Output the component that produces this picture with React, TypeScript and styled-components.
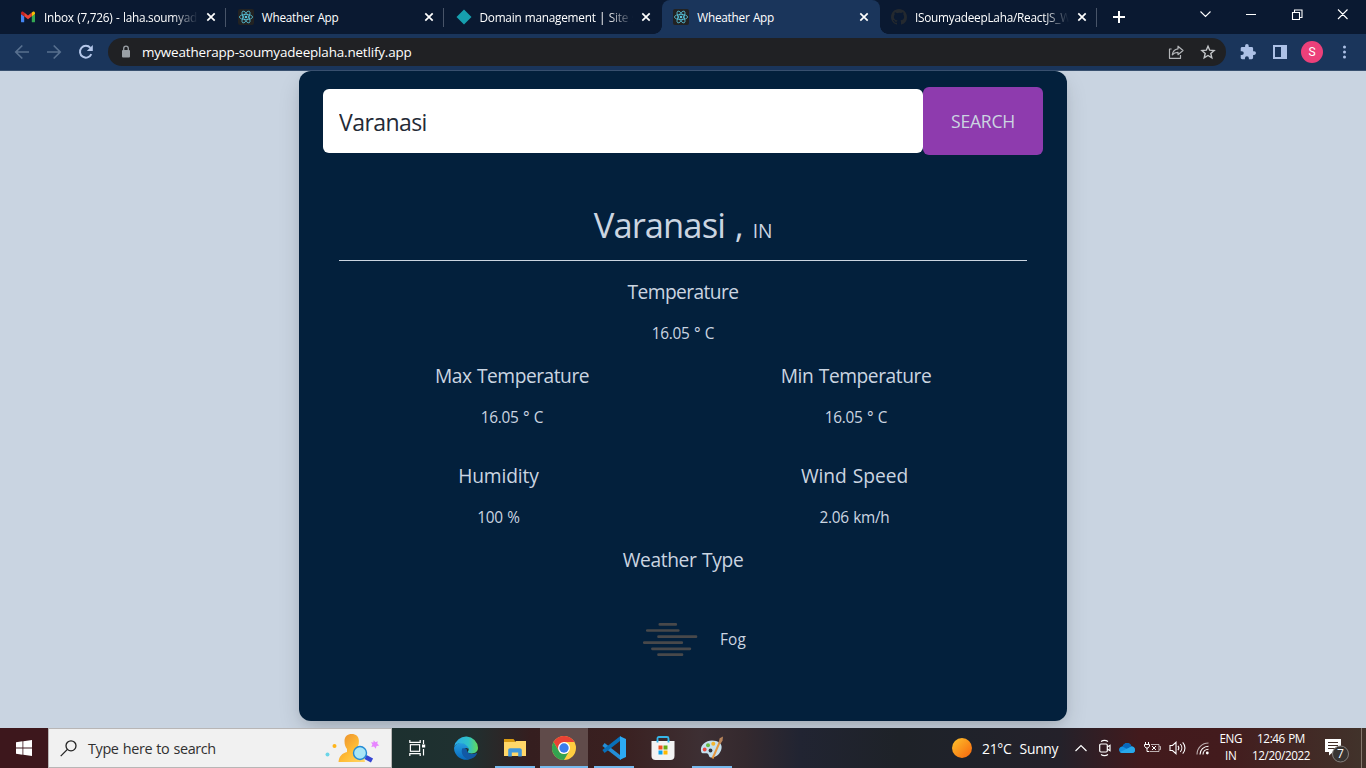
import React from "react";
import styled, { createGlobalStyle, css } from "styled-components";

const type = (px: number, tracking = -0.02) => css`
  font-size: ${px * 0.96}px;
  letter-spacing: ${px * tracking}px;
  word-spacing: ${px * 0.05}px;
`;

const GlobalStyle = createGlobalStyle`
  * { box-sizing: border-box; }
  body { margin: 0; overflow: hidden; font-family: "Open Sans", "Noto Sans", sans-serif; }
  svg { display: block; flex: none; }
`;

const Screen = styled.div`
  width: 1366px;
  height: 768px;
  display: flex;
  flex-direction: column;
  overflow: hidden;
`;

/* ---------- Browser chrome ---------- */
const TabStrip = styled.div`
  height: 34px;
  flex: none;
  display: flex;
  background: #0a1931;
  padding-left: 9px;
  color: #fff;
`;

const TabItem = styled.div<{ $active?: boolean; $divider?: boolean }>`
  position: relative;
  width: 217.75px;
  flex: none;
  display: flex;
  align-items: center;
  padding: 0 10px 0 11px;
  background: ${(p) => (p.$active ? "#1a355b" : "transparent")};
  border-radius: 8px 8px 0 0;
  ${(p) =>
    p.$divider &&
    css`
      &::after {
        content: "";
        position: absolute;
        right: 0.5px;
        top: 8px;
        width: 1px;
        height: 19px;
        background: #485468;
      }
    `}
  ${(p) =>
    p.$active &&
    css`
      &::before,
      &::after {
        content: "";
        position: absolute;
        bottom: 0;
        width: 8px;
        height: 8px;
      }
      &::before {
        left: -8px;
        background: radial-gradient(circle at 0 0, transparent 7.5px, #1a355b 8px);
      }
      &::after {
        right: -8px;
        background: radial-gradient(circle at 100% 0, transparent 7.5px, #1a355b 8px);
      }
    `}
`;

const TabTitle = styled.span<{ $fade?: boolean }>`
  ${type(12.3)}
  flex: 1;
  min-width: 0;
  margin: 0 7px 0 8px;
  line-height: 18px;
  white-space: nowrap;
  ${(p) => p.$fade && css`mask-image: linear-gradient(90deg, #000 calc(100% - 26px), transparent);`}
`;

const StripControls = styled.div`
  flex: 1;
  display: flex;
  align-items: center;
`;

const NewTab = styled.span`
  width: 97px;
  padding-left: 14px;
`;

const Toolbar = styled.div`
  height: 37px;
  flex: none;
  display: flex;
  align-items: center;
  background: #1a355b;
  border-bottom: 1px solid #38506f;
  padding: 0 13px;
`;

const NavButtons = styled.div`
  display: flex;
  gap: 16px;
  width: 95px;
  padding-left: 1px;
`;

const AddressBar = styled.div`
  width: 1118px;
  height: 28px;
  display: flex;
  align-items: center;
  border-radius: 14px;
  background: #202124;
  padding: 0 10px 0 12px;
`;

const Url = styled.span`
  ${type(14, -0.0115)}
  flex: 1;
  margin-left: 10px;
  color: #fff;
  line-height: 20px;
`;

const AddressActions = styled.div`
  display: flex;
  gap: 16px;
`;

const Extensions = styled.div`
  display: flex;
  align-items: center;
  margin-left: 14px;
  flex: 1;
`;

const PanelIcon = styled.span`
  width: 14px;
  height: 14px;
  margin-left: 17px;
  border: 2px solid #adc1e6;
  border-right-width: 6px;
`;

const Avatar = styled.span`
  width: 22px;
  height: 22px;
  margin: 0 13px 0 14px;
  border-radius: 50%;
  background: #ec407a;
  color: #fff;
  font: 12px/22px Roboto, sans-serif;
  text-align: center;
`;

/* ---------- Page ---------- */
const Page = styled.main`
  height: 657px;
  flex: none;
  display: flex;
  justify-content: center;
  align-items: flex-start;
  background: #c9d4e1;
  overflow: hidden;
`;

const Card = styled.section`
  width: 768px;
  height: 650px;
  border-radius: 12px;
  background: #03203c;
  color: #cbd5e1;
  padding: 16px 24px 0;
  box-shadow: 0 10px 25px -3px rgba(0, 0, 0, 0.16), 0 4px 12px -4px rgba(0, 0, 0, 0.1);
`;

const SearchForm = styled.form`
  display: flex;
  align-items: center;
  height: 68px;
`;

const SearchInput = styled.input`
  ${type(24, -0.024)}
  width: 600px;
  height: 64px;
  border: 0;
  outline: 0;
  border-radius: 6px;
  padding: 2px 16px 0;
  background: #fff;
  color: #242a36;
  font-family: inherit;
`;

const SearchButton = styled.button`
  ${type(18.3, -0.013)}
  width: 120px;
  height: 68px;
  border: 0;
  border-radius: 6px;
  background: #8e3bae;
  color: #cbd5e1;
  font-family: inherit;
`;

const Result = styled.div`
  margin: 0 16px;
  text-align: center;
`;

const Place = styled.h1`
  ${type(36, -0.026)}
  margin: 0;
  height: 106px;
  padding-top: 50px;
  border-bottom: 1px solid #cbd5e1;
  font-weight: 400;
  line-height: 40px;
`;

const Country = styled.span`
  ${type(20, -0.005)}
`;

const Metric = styled.div<{ $shift?: number }>`
  margin-left: ${(p) => p.$shift ?? 0}px;
`;

const MetricName = styled.h2<{ $tracking?: number }>`
  ${(p) => type(20, p.$tracking ?? -0.022)}
  margin: 0;
  font-weight: 400;
  line-height: 28px;
`;

const MetricValue = styled.p`
  ${type(16, -0.018)}
  margin: 16px 0 0;
  line-height: 24px;
`;

const MetricRow = styled.div<{ $columns: string; $gap: number }>`
  display: grid;
  grid-template-columns: ${(p) => p.$columns};
  margin-top: ${(p) => p.$gap}px;
`;

const Condition = styled.div`
  display: flex;
  align-items: center;
  height: 100px;
  margin-top: 16px;
  padding-left: 281px;
`;

const ConditionText = styled.span`
  ${type(16, 0.01)}
  margin-top: -1px;
`;

const FogArt = styled.svg`
  width: 100px;
  height: 100px;
`;

/* ---------- Taskbar ---------- */
const Taskbar = styled.footer`
  height: 40px;
  flex: none;
  display: flex;
  color: #fff;
  background: linear-gradient(
    90deg,
    #3d171c 0,
    #3d171c 48px,
    #1c302f 390px,
    #203030 470px,
    #351e1f 530px,
    #3a2020 620px,
    #3d2f33 700px,
    #34292e 745px,
    #212432 800px,
    #1e2228 900px,
    #1f222a 960px,
    #24212a 1060px,
    #421a1d 1140px,
    #431b1d 1220px,
    #41332b 1366px
  );
`;

const StartButton = styled.div`
  width: 48px;
  display: flex;
  align-items: center;
  justify-content: center;
`;

const SearchBox = styled.div`
  width: 344px;
  display: flex;
  align-items: center;
  background: #f1f1f1;
  border: 1px solid #b8b6b6;
  padding: 0 11px;
  color: #303030;
`;

const SearchHint = styled.span`
  ${type(15, -0.024)}
  flex: 1;
  margin-left: 10px;
`;

const Apps = styled.div`
  display: flex;
  width: 560px;
  padding-left: 0.6px;
`;

const TaskButton = styled.div<{ $open?: boolean; $current?: boolean }>`
  width: ${(p) => (p.$current ? 48 : 40)}px;
  margin: 0 ${(p) => (p.$current ? 0.55 : 4.55)}px;
  display: flex;
  align-items: center;
  justify-content: center;
  padding-top: ${(p) => (p.$open || p.$current ? 2 : 0)}px;
  background: ${(p) => (p.$current ? "#604b4a" : "transparent")};
  border-bottom: ${(p) => (p.$open || p.$current ? "2px solid #76b9ed" : "0")};
`;

const Weather = styled.div`
  ${type(14.5)}
  display: flex;
  align-items: center;
  width: 120px;
`;

const WeatherText = styled.span`
  margin-left: 10px;
  white-space: pre;
`;

const Tray = styled.div`
  display: flex;
  align-items: center;
  gap: 8.6px;
  width: 139px;
  padding-left: 2px;
`;

const Clock = styled.div<{ $width: number }>`
  ${type(12.2, -0.032)}
  width: ${(p) => p.$width}px;
  text-align: center;
  line-height: 17px;
  padding-top: 2px;
  white-space: nowrap;
`;

const Notifications = styled.div`
  display: flex;
  align-items: center;
  flex: 1;
  padding: 4px 0 0 13px;
`;

const DesktopEdge = styled.div`
  width: 5px;
  border-left: 1px solid #85796f;
`;

/* ---------- Icons ---------- */
const CloseIcon = () => (
  <svg width="12" height="12" viewBox="0 0 12 12" stroke="#fff" strokeWidth="1.7">
    <path d="M2.3 2.3 9.7 9.7M9.7 2.3 2.3 9.7" />
  </svg>
);

const GmailIcon = () => (
  <svg width="16" height="16" viewBox="0 0 16 16">
    <path fill="#4285f4" d="M1 5v7.4c0 .5.4.9.9.9h2.3V7.2Z" />
    <path fill="#34a853" d="M15 5v7.4c0 .5-.4.9-.9.9h-2.3V7.2Z" />
    <path fill="#ea4335" d="M4.2 3.5 8 6.4l3.8-2.9v3.8L8 10.2 4.2 7.3Z" />
    <path fill="#c5221f" d="M1 4.1v1l3.2 2.4v-4l-1-.7C2.3 2.2 1 2.9 1 4.1Z" />
    <path fill="#fbbc04" d="M15 4.1v1l-3.2 2.4v-4l1-.7c.9-.6 2.2.1 2.2 1.3Z" />
  </svg>
);

const ReactIcon = () => (
  <svg width="16" height="16" viewBox="0 0 16 16" fill="none" stroke="#58c4dc" strokeWidth=".8">
    <rect width="16" height="16" rx="2" fill="#222" stroke="none" />
    <ellipse cx="8" cy="8" rx="6.6" ry="2.6" />
    <ellipse cx="8" cy="8" rx="6.6" ry="2.6" transform="rotate(60 8 8)" />
    <ellipse cx="8" cy="8" rx="6.6" ry="2.6" transform="rotate(120 8 8)" />
    <circle cx="8" cy="8" r="1.3" fill="#58c4dc" stroke="none" />
  </svg>
);

const NetlifyIcon = () => (
  <svg width="16" height="16" viewBox="0 0 16 16">
    <path fill="#169fae" d="M8 .5 15.5 8 8 15.5.5 8Z" />
  </svg>
);

const GithubIcon = () => (
  <svg width="16" height="16" viewBox="0 0 16 16" fill="#24292f">
    <path d="M8 0C3.58 0 0 3.58 0 8c0 3.54 2.29 6.53 5.47 7.59.4.07.55-.17.55-.38 0-.19-.01-.82-.01-1.49-2.01.37-2.53-.49-2.69-.94-.09-.23-.48-.94-.82-1.13-.28-.15-.68-.52-.01-.53.63-.01 1.08.58 1.23.82.72 1.21 1.87.87 2.33.66.07-.52.28-.87.51-1.07-1.78-.2-3.64-.89-3.64-3.95 0-.87.31-1.59.82-2.15-.08-.2-.36-1.02.08-2.12 0 0 .67-.21 2.2.82A7.6 7.6 0 0 1 8 3.86c.68 0 1.36.09 2 .27 1.53-1.04 2.2-.82 2.2-.82.44 1.1.16 1.92.08 2.12.51.56.82 1.27.82 2.15 0 3.07-1.87 3.75-3.65 3.95.29.25.54.73.54 1.48 0 1.07-.01 1.93-.01 2.2 0 .21.15.46.55.38A8 8 0 0 0 16 8c0-4.42-3.58-8-8-8Z" />
  </svg>
);

const ArrowIcon = ({ right }: { right?: boolean }) => (
  <svg width="16" height="16" viewBox="0 0 16 16" fill="none" stroke="#58708f" strokeWidth="1.7">
    <path d={right ? "M1 8h13M7.7 1.5 14.2 8l-6.5 6.5" : "M15 8H2M8.3 1.5 1.8 8l6.500 6.500"} />
  </svg>
);

const ReloadIcon = () => (
  <svg width="16" height="16" viewBox="0 0 16 16">
    <path d="M13.3 10.1A5.9 5.9 0 1 1 12.4 3.9" fill="none" stroke="#b4c7ea" strokeWidth="2" />
    <path d="M14.8 1v6H8.8Z" fill="#b4c7ea" />
  </svg>
);

const LockIcon = () => (
  <svg width="12" height="14" viewBox="0 0 12 14">
    <rect x="2" y="5" width="8" height="7.5" rx="1" fill="#9aa0a6" />
    <path d="M3.7 5V3.5a2.3 2.3 0 0 1 4.6 0V5" fill="none" stroke="#9aa0a6" strokeWidth="1.3" />
  </svg>
);

const ShareIcon = () => (
  <svg width="16" height="16" viewBox="0 0 16 16" fill="none" stroke="#b4b6b9" strokeWidth="1.2" strokeLinejoin="round">
    <path d="M3.6 5H1.5v9.3h11V11" />
    <path d="M10 2.2 15 6.500l-5 4.200V8.300c-2.600 0-4.300.7-5.700 2.500.4-3.300 2.300-5.500 5.700-6Z" />
  </svg>
);

const StarIcon = () => (
  <svg width="16" height="16" viewBox="0 0 16 16" fill="none" stroke="#c4c7ca" strokeWidth="1.4">
    <path d="m8 2.200 1.700 4 4.400.4-3.300 2.900 1 4.300L8 11.500l-3.800 2.300 1-4.300-3.300-2.900 4.400-.4Z" />
  </svg>
);

const PuzzleIcon = () => (
  <svg width="16" height="16" viewBox="1 1 22 22" fill="#adc1e6">
    <path d="M20.500 11H19V7a2 2 0 0 0-2-2h-4V3.500a2.500 2.500 0 0 0-5 0V5H4a2 2 0 0 0-2 2v3.800h1.500a2.700 2.700 0 0 1 0 5.400H2V20c0 1.100.9 2 2 2h3.800v-1.500a2.700 2.700 0 0 1 5.400 0V22H17a2 2 0 0 0 2-2v-4h1.500a2.500 2.500 0 0 0 0-5Z" />
  </svg>
);

const FogIcon = () => (
  <FogArt viewBox="0 0 100 100" stroke="#48484a" strokeWidth="2.7" strokeLinecap="round">
    <path d="M39.8 34.4h16M27.3 40.5h31M38.5 46.7h37.5M24.3 52.7h37.5M32.4 58.8h37.5M38.5 64.7h23.5" />
  </FogArt>
);

const WindowsIcon = () => (
  <svg width="16" height="16" viewBox="0 0 16 16" fill="#fff">
    <path d="M0 2.2 6.5 1.3v6.3H0ZM7.3 1.2 16 0v7.6H7.3ZM0 8.4h6.5v6.3L0 13.8ZM7.3 8.4H16V16l-8.7-1.2Z" />
  </svg>
);

const MagnifierIcon = () => (
  <svg width="18" height="18" viewBox="0 0 18 18" fill="none" stroke="#222" strokeWidth="1.3">
    <circle cx="11" cy="6.8" r="5" />
    <path d="m7.4 10.4-6.7 6.7" />
  </svg>
);

const SearchArt = () => (
  <svg width="56" height="32" viewBox="0 0 56 32">
    <defs>
      <linearGradient id="person" x1="0" x2="1" y1="0" y2="1">
        <stop offset="0" stopColor="#e8892d" />
        <stop offset=".55" stopColor="#ffbd35" />
        <stop offset="1" stopColor="#ffd76a" />
      </linearGradient>
    </defs>
    <circle cx="3.5" cy="22.5" r="2" fill="#6bd5e8" />
    <circle cx="10.5" cy="14" r="2" fill="#ffb51b" />
    <path fill="url(#person)" d="M20.5 9c0-4.500 3-7 7.200-7s7.200 2.500 7.200 7c0 4-1 6-2.500 8v3c4.500 1 8 4 8.600 10H14.500c.5-6 4-9 8.500-10v-3c-1.500-2-2.500-4-2.500-8Z" />
    <path d="m41.5 25 6.500 3.500" stroke="#3545d4" strokeWidth="4.5" />
    <circle cx="36" cy="21" r="6.5" fill="#a8e6f6" stroke="#238bd5" strokeWidth="1.4" />
    <path fill="#e785ff" d="M49.600 8.300 51.500 10.300 53.700 9.200 53.300 11.800 55.300 13.500 52.500 14 51.800 16.700 50 14.500 47.300 14.900 48.400 12.500 47 10.200 49.500 10.600Z" />
  </svg>
);

const TaskViewIcon = () => (
  <svg width="17" height="16" viewBox="0 0 17 16" fill="none" stroke="#fff" strokeWidth="1.2">
    <path d="M.8 0v2.300h10.400V0M.8 16v-2.300h10.400V16M14.500 0v4M14.500 9v6.500" />
    <rect x="1.4" y="4.7" width="9.2" height="6.6" />
    <path d="M13 4.500h3.200v3H13Z" fill="#fff" stroke="none" />
  </svg>
);

const EdgeIcon = () => (
  <svg width="24" height="24" viewBox="0 0 24 24">
    <defs>
      <linearGradient id="edgeTop" x1="0" x2="1">
        <stop offset="0" stopColor="#2aa9e8" />
        <stop offset=".6" stopColor="#2fc2c9" />
        <stop offset="1" stopColor="#65db58" />
      </linearGradient>
      <linearGradient id="edgeBody" x1="0" x2="0" y1="0" y2="1">
        <stop offset="0" stopColor="#259ee0" />
        <stop offset="1" stopColor="#0868bb" />
      </linearGradient>
    </defs>
    <path d="M0 12C1 8 5 6.500 8.500 7c4 .5 6 3 5.800 6-1.800-2-5.300-.5-5 3.500.3 3.500 3 6 6.200 6.800A12 12 0 0 1 0 12Z" fill="url(#edgeBody)" />
    <path d="M8.200 12.500c-1.800 4.500 1.500 10.500 7.300 10.800 3.200-.6 5.800-2.600 7.300-5.300.4-.8-.2-1.100-.8-.8-4.500 2-9.500 0-9.200-4-2-1.300-4-.9-4.600-.7Z" fill="#1259a5" />
    <path d="M.2 10.500A12 12 0 0 1 24 11.800c0 4-3 5.700-6.200 5.700-3 0-4.200-1-3.900-2 1.300-1.200.9-3.200-.3-4.800C10.500 6.400 3.500 6 .2 10.500Z" fill="url(#edgeTop)" />
  </svg>
);

const FolderIcon = () => (
  <svg width="22" height="20" viewBox="0 0 22 20">
    <path fill="#d89a12" d="M0 1h9.500l1.500 2V5H0Z" />
    <path fill="#ffd768" d="M0 4h11l1-1h10v15H0Z" />
    <path fill="#3f97dc" d="M4.200 18.500v-6.300c0-1.200.8-2 2-2h9.600c1.200 0 2 .8 2 2v6.300h-3.600v-4H7.800v4Z" />
  </svg>
);

const ChromeIcon = () => (
  <svg width="24" height="24" viewBox="0 0 24 24">
    <circle cx="12" cy="12" r="12" fill="#ffcd40" />
    <path fill="#e94235" d="M1.600 6A12 12 0 0 1 22.400 6H12L6.800 15Z" />
    <path fill="#34a350" d="M1.600 6A12 12 0 0 0 12 24l5.200-9A6 6 0 0 1 6.800 15Z" />
    <circle cx="12" cy="12" r="6" fill="#fff" />
    <circle cx="12" cy="12" r="4.7" fill="#397cec" />
  </svg>
);

const CodeIcon = () => (
  <svg width="24" height="24" viewBox="0 0 24 24">
    <path d="m1.500 8.500 18 14" stroke="#238ed8" strokeWidth="3.6" />
    <path d="m1.500 15.500 18-14" stroke="#0870ba" strokeWidth="3.6" />
    <path d="M18 .3 24 3v18l-6 2.700Z" fill="#2caaf4" />
  </svg>
);

const StoreIcon = () => (
  <svg width="24" height="24" viewBox="0 0 24 24">
    <path d="M6.500 7V2.500c0-1 .5-1.500 1.500-1.500h8c1 0 1.500.5 1.500 1.500V7" fill="none" stroke="#35b6e9" strokeWidth="1.8" />
    <path d="M.5 5h23v15c0 2.500-1.500 4-4 4h-15c-2.500 0-4-1.500-4-4Z" fill="#f3f3f3" />
    <path d="M6.500 6.500V4.500M17.500 6.500V4.500" stroke="#35b6e9" strokeWidth="1.8" />
    <path d="M7.500 9.500h4v4h-4Z" fill="#f25022" />
    <path d="M12.500 9.500h4v4h-4Z" fill="#67ad12" />
    <path d="M7.500 14.500h4v4h-4Z" fill="#09a4ef" />
    <path d="M12.500 14.500h4v4h-4Z" fill="#ffb900" />
  </svg>
);

const PaintIcon = () => (
  <svg width="24" height="24" viewBox="0 0 24 24">
    <path d="M1 15C0 9 6 4.500 12 4.500s10.500 3 9.500 8c-1 5.500-6 9.500-10.500 9-3-.4-1.500-4-4.500-4.200C4.500 17 1.600 18.500 1 15Z" fill="#c4e0ee" />
    <circle cx="4.7" cy="13.5" r="1.9" fill="#e94b41" />
    <circle cx="8" cy="9.3" r="2" fill="#67bb45" />
    <circle cx="13.3" cy="7.8" r="2" fill="#f4b52f" />
    <circle cx="10.5" cy="14.5" r="1.9" fill="#35353a" />
    <path d="m12.500 22.500 7.500-17" stroke="#e5973f" strokeWidth="2" />
    <path d="m18.500 7.300 1.200-5L23 .6l-.5 4.200-2.200 3.300Z" fill="#b8845b" />
  </svg>
);

const SunIcon = () => (
  <svg width="20" height="20" viewBox="0 0 20 20">
    <defs>
      <linearGradient id="sun" x1="0" x2="1" y1="0" y2="1">
        <stop offset="0" stopColor="#fcc42d" />
        <stop offset="1" stopColor="#f7630c" />
      </linearGradient>
    </defs>
    <circle cx="10" cy="10" r="10" fill="url(#sun)" />
  </svg>
);

const ChevronUpIcon = () => (
  <svg width="14" height="8" viewBox="0 0 14 8" fill="none" stroke="#fff" strokeWidth="1.2">
    <path d="m1.500 7 5.500-5.500L12.500 7" />
  </svg>
);

const CameraIcon = () => (
  <svg width="14" height="18" viewBox="-1 0 14 18" fill="none" stroke="#fff" strokeWidth="1.2">
    <rect x="1.7" y="5" width="7.6" height="8" rx="1.2" />
    <path d="M9.300 8 12 6.300v5.400L9.300 10M3 2.500c2-1.300 5-1.300 7 0M3 15.500c2 1.300 5 1.300 7 0" />
  </svg>
);

const CloudIcon = () => (
  <svg width="16" height="12" viewBox="0 0 16 12">
    <path d="M3.500 4.500C5 .5 10.500-.5 12.500 4.500 14.500 4.300 16 6 16 8c0 1.800-1.200 3-3 3H3.500C1.500 11 0 9.500 0 7.700s1.500-3.200 3.500-3.200Z" fill="#1491e2" />
    <path d="M3.500 4.500C5 .5 10.500-.5 12.500 4.500L8 7Z" fill="#0868bd" />
    <path d="m1 10 11.500-5.500C14.500 4.300 16 6 16 8c0 1.800-1.200 3-3 3H3.500C2.500 11 1.500 10.600 1 10Z" fill="#28a8ea" />
  </svg>
);

const BatteryIcon = () => (
  <svg width="17" height="12" viewBox="0 0 17 12" fill="none" stroke="#fff" strokeWidth="1">
    <path d="M1.500 0v2.500M4.500 0v2.500M.5 2.500h5v1.700L4 6H2L.5 4.200ZM3 6v3.500h2" />
    <path d="M7 2.500h8v7H5.500M15.500 4.500h1v3h-1" opacity=".65" />
    <path d="m8 4 4 4M12 4 8 8" />
  </svg>
);

const SpeakerIcon = () => (
  <svg width="18" height="14" viewBox="0 0 18 14" fill="none" stroke="#fff" strokeWidth="1.1">
    <path d="M1 4.500h2.500L7 1.300v11.400L3.500 9.500H1ZM9 4.800c1 1.300 1 3.100 0 4.400M11.300 3c2 2.300 2 5.700 0 8M13.700 1.300c3 3.300 3 8.100 0 11.400" />
  </svg>
);

const WifiIcon = () => (
  <svg width="13" height="14" viewBox="0 0 13 14" fill="none" stroke="#fff" strokeWidth="1.1">
    <path d="M1 13.500C1 7 6 2 12.500 2" opacity=".65" />
    <path d="M4 13.500c0-4.700 3.700-8.300 8.500-8.300M7 13.500c0-3 2.300-5.300 5.500-5.300" />
    <circle cx="11.3" cy="12" r="1.4" fill="#fff" stroke="none" />
  </svg>
);

const Count = styled.text`
  font: 12px "Open Sans", sans-serif;
`;

const NoticeIcon = () => (
  <svg width="26" height="28" viewBox="0 0 26 28">
    <path d="M0 3h16v13H8l-4 3.500V16H0Z" fill="#fff" />
    <path d="M3 6.500h10M3 9.500h10M3 12.500h7" stroke="#43302b" />
    <circle cx="15.5" cy="18" r="8" fill="#383432" stroke="#85807d" />
    <Count x="15.5" y="22.3" fill="#fff" textAnchor="middle">7</Count>
  </svg>
);

const tabs = [
  { title: "Inbox (7,726) - laha.soumyad", icon: <GmailIcon />, fade: true, divider: true },
  { title: "Wheather App", icon: <ReactIcon />, divider: true },
  { title: "Domain management | Site s", icon: <NetlifyIcon />, fade: true },
  { title: "Wheather App", icon: <ReactIcon />, active: true },
  { title: "ISoumyadeepLaha/ReactJS_W", icon: <GithubIcon />, fade: true, divider: true },
];

const Reading = ({ name, value, shift, tracking }: { name: string; value: string; shift?: number; tracking?: number }) => (
  <Metric $shift={shift}>
    <MetricName $tracking={tracking}>{name}</MetricName>
    <MetricValue>{value}</MetricValue>
  </Metric>
);

export default function App() {
  return (
    <Screen>
      <GlobalStyle />
      <TabStrip>
        {tabs.map((tab, i) => (
          <TabItem key={i} $active={tab.active} $divider={tab.divider}>
            {tab.icon}
            <TabTitle $fade={tab.fade}>{tab.title}</TabTitle>
            <CloseIcon />
          </TabItem>
        ))}
        <StripControls>
          <NewTab>
            <svg width="14" height="14" viewBox="0 0 14 14" stroke="#fff" strokeWidth="2">
              <path d="M7 1v12M1 7h12" />
            </svg>
          </NewTab>
          <svg width="168" height="28" viewBox="0 0 168 28" fill="none" stroke="#fff" strokeWidth="1.1">
            <path d="m5.500 8.500 5 5 5-5M51 11.500h10M97.500 9.500h7v7h-7ZM99.500 9V7h7.500v7.500h-2M143 6.500l9.500 9.500M152.500 6.500 143 16" />
          </svg>
        </StripControls>
      </TabStrip>
      <Toolbar>
        <NavButtons>
          <ArrowIcon />
          <ArrowIcon right />
          <ReloadIcon />
        </NavButtons>
        <AddressBar>
          <LockIcon />
          <Url>myweatherapp-soumyadeeplaha.netlify.app</Url>
          <AddressActions>
            <ShareIcon />
            <StarIcon />
          </AddressActions>
        </AddressBar>
        <Extensions>
          <PuzzleIcon />
          <PanelIcon />
          <Avatar>S</Avatar>
          <svg width="16" height="16" viewBox="0 0 16 16" fill="#adc1e6">
            <circle cx="8.5" cy="3" r="1.5" />
            <circle cx="8.5" cy="8" r="1.5" />
            <circle cx="8.5" cy="13" r="1.5" />
          </svg>
        </Extensions>
      </Toolbar>
      <Page>
        <Card>
          <SearchForm>
            <SearchInput defaultValue="Varanasi" spellCheck={false} />
            <SearchButton type="button">SEARCH</SearchButton>
          </SearchForm>
          <Result>
            <Place>
              Varanasi , <Country>IN</Country>
            </Place>
            <MetricRow $columns="1fr" $gap={17}>
              <Reading name="Temperature" value="16.05 ° C" tracking={-0.029} />
            </MetricRow>
            <MetricRow $columns="346px 342px" $gap={16}>
              <Reading name="Max Temperature" value="16.05 ° C" tracking={-0.024} />
              <Reading name="Min Temperature" value="16.05 ° C" />
            </MetricRow>
            <MetricRow $columns="319px 369px" $gap={32}>
              <Reading name="Humidity" value="100 %" tracking={-0.006} />
              <Reading name="Wind Speed" value="2.06 km/h" shift={24} tracking={-0.002} />
            </MetricRow>
            <MetricRow $columns="1fr" $gap={16}>
              <MetricName $tracking={-0.018}>Weather Type</MetricName>
            </MetricRow>
            <Condition>
              <FogIcon />
              <ConditionText>Fog</ConditionText>
            </Condition>
          </Result>
        </Card>
      </Page>
      <Taskbar>
        <StartButton>
          <WindowsIcon />
        </StartButton>
        <SearchBox>
          <MagnifierIcon />
          <SearchHint>Type here to search</SearchHint>
          <SearchArt />
        </SearchBox>
        <Apps>
          <TaskButton><TaskViewIcon /></TaskButton>
          <TaskButton><EdgeIcon /></TaskButton>
          <TaskButton $open><FolderIcon /></TaskButton>
          <TaskButton $current><ChromeIcon /></TaskButton>
          <TaskButton $open><CodeIcon /></TaskButton>
          <TaskButton><StoreIcon /></TaskButton>
          <TaskButton $open><PaintIcon /></TaskButton>
        </Apps>
        <Weather>
          <SunIcon />
          <WeatherText>21°C  Sunny</WeatherText>
        </Weather>
        <Tray>
          <ChevronUpIcon />
          <CameraIcon />
          <CloudIcon />
          <BatteryIcon />
          <SpeakerIcon />
          <WifiIcon />
        </Tray>
        <Clock $width={39.5}>ENG<br />IN</Clock>
        <Clock $width={61}>12:46 PM<br />12/20/2022</Clock>
        <Notifications>
          <NoticeIcon />
        </Notifications>
        <DesktopEdge />
      </Taskbar>
    </Screen>
  );
}
